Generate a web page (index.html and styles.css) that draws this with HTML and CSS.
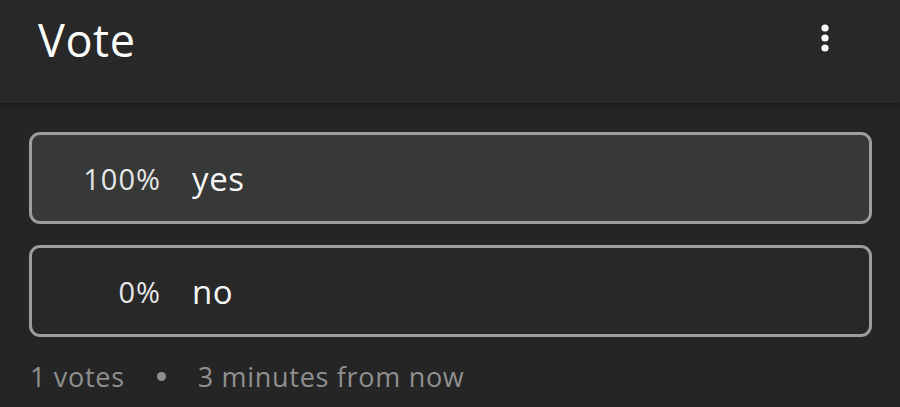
FILE: index.html
```html
<!DOCTYPE html>
<html>
<head>
<meta charset="utf-8">
<link rel="stylesheet" href="styles.css">
</head>
<body>
<header class="bar">
  <h1 class="title">Vote</h1>
  <button class="menu" aria-label="More">
    <svg width="12" height="28" viewBox="0 0 12 28"><circle cx="6" cy="4" r="3.6" fill="#fff"/><circle cx="6" cy="14" r="3.6" fill="#fff"/><circle cx="6" cy="24" r="3.6" fill="#fff"/></svg>
  </button>
</header>
<main class="content">
  <div class="option option-win">
    <span class="pct">100%</span>
    <span class="label">yes</span>
  </div>
  <div class="option">
    <span class="pct">0%</span>
    <span class="label">no</span>
  </div>
  <div class="meta">
    <span>1 votes</span>
    <span class="dot"></span>
    <span>3 minutes from now</span>
  </div>
</main>
</body>
</html>
```
FILE: styles.css
```css
* { box-sizing: border-box; }
html, body { margin: 0; padding: 0; }
body {
  background: #252525;
  font-family: "Open Sans", "Noto Sans", sans-serif;
  width: 900px;
  height: 407px;
  overflow: hidden;
}
.bar {
  height: 103px;
  background: #282828;
  display: flex;
  align-items: flex-start;
  justify-content: space-between;
  padding: 0 69px 0 38px;
  box-shadow: 0 2px 6px rgba(0,0,0,0.35);
  position: relative;
}
.title {
  margin: 0;
  padding-top: 10px;
  font-size: 45px;
  letter-spacing: 0.6px;
  font-weight: 400;
  color: #fff;
  line-height: 60px;
}
.menu {
  background: none;
  border: 0;
  padding: 0;
  margin-top: 24px;
  display: flex;
}
.content {
  padding: 29px 28px 0 29px;
  display: flex;
  flex-direction: column;
  gap: 21px;
}
.option {
  height: 92px;
  border: 3px solid #9d9d9d;
  border-radius: 11px;
  background: #282828;
  display: flex;
  align-items: center;
  color: #f0f0f0;
}
.option-win { background: #373938; }
.pct {
  width: 129px;
  text-align: right;
  font-size: 29px;
  letter-spacing: 1px;
  color: #e6e6e6;
}
.label {
  margin-left: 31px;
  font-size: 33px;
  letter-spacing: 0.6px;
  color: #f7f7f7;
}
.meta {
  margin-top: 0;
  display: flex;
  align-items: center;
  font-size: 27px;
  letter-spacing: 0.7px;
  color: #8f8f8f;
  padding-left: 1px;
}
.dot {
  width: 9px;
  height: 9px;
  border-radius: 50%;
  background: #8f8f8f;
  margin: 0 32px;
}
```
